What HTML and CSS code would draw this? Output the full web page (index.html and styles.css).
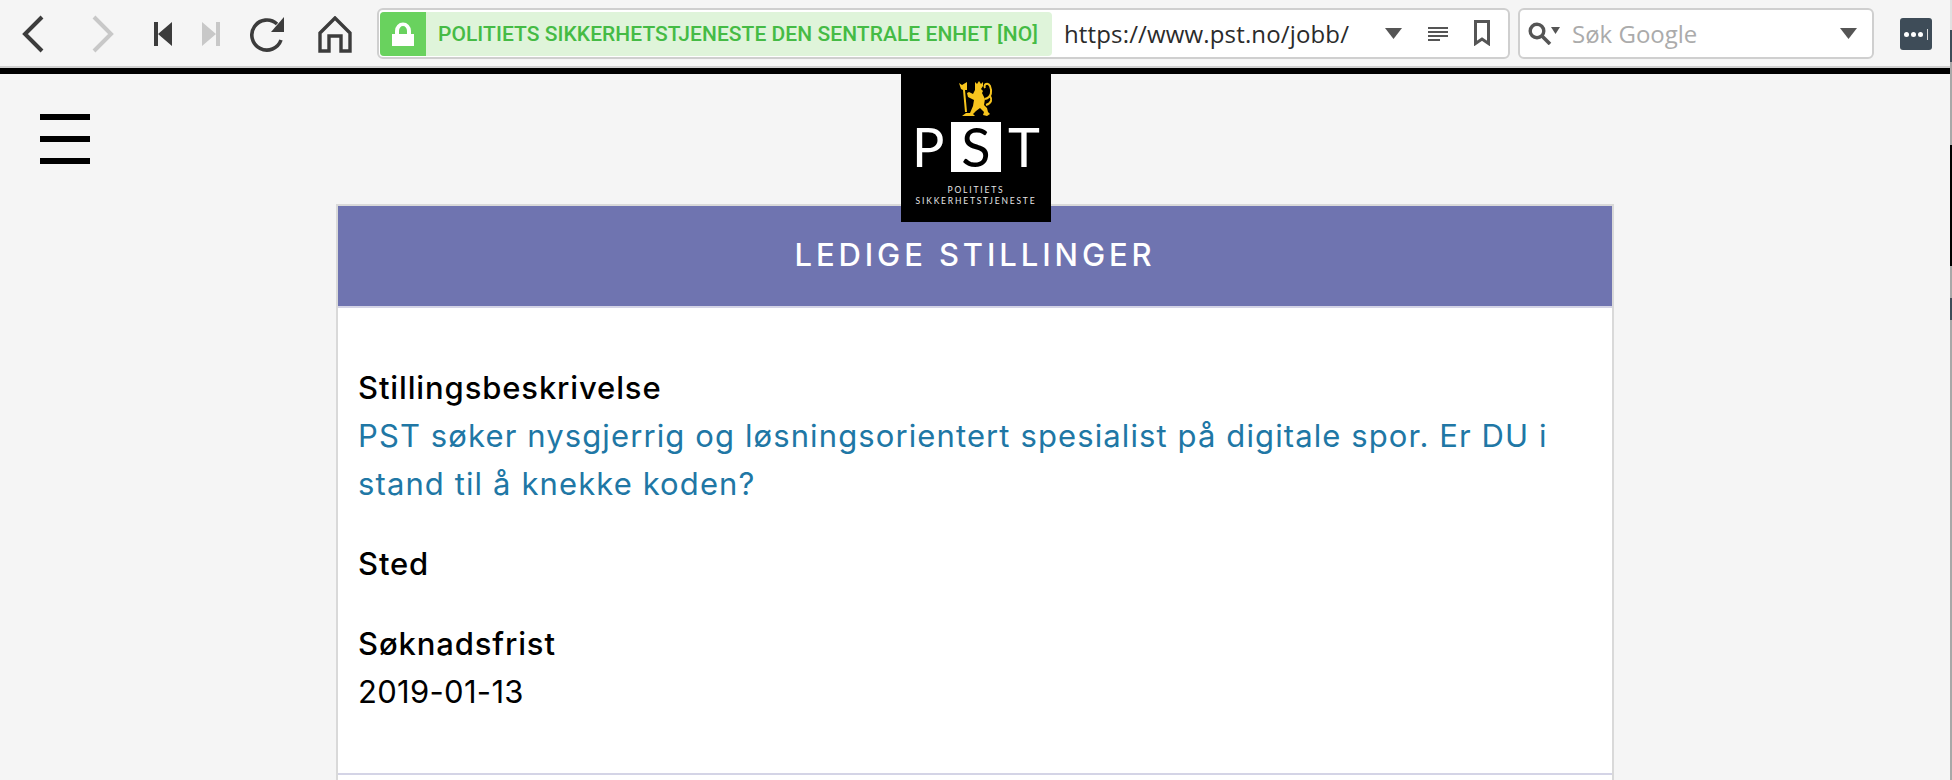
FILE: index.html
```html
<!DOCTYPE html>
<html lang="no">
<head>
    <meta charset="UTF-8">
    <link rel="stylesheet" href="styles.css">
    <title>Ledige stillinger - PST</title>
</head>
<body>
    <!-- Nettleserens verktøylinje -->
    <div class="toolbar">
        <svg class="tool tool-back" width="22" height="38" viewBox="0 0 22 38"><path d="M20 2 L3 19 L20 36" fill="none" stroke="#3c3c3c" stroke-width="4"/></svg>
        <svg class="tool tool-forward" width="22" height="38" viewBox="0 0 22 38"><path d="M2 2 L19 19 L2 36" fill="none" stroke="#c8c8c8" stroke-width="4"/></svg>
        <svg class="tool tool-first" width="18" height="24" viewBox="0 0 18 24"><path d="M0 0 H4 V24 H0 Z M18 0 V24 L4 12 Z" fill="#3c3c3c"/></svg>
        <svg class="tool tool-last" width="18" height="24" viewBox="0 0 18 24"><path d="M18 0 H14 V24 H18 Z M0 0 V24 L14 12 Z" fill="#c8c8c8"/></svg>
        <svg class="tool tool-reload" width="36" height="36" viewBox="0 0 36 36"><path d="M31 24 A15 15 0 1 1 27 8" fill="none" stroke="#3c3c3c" stroke-width="3.6"/><path d="M34 1 V16 H21 Z" fill="#3c3c3c"/></svg>
        <svg class="tool tool-home" width="34" height="37" viewBox="0 0 34 37"><path d="M2 35 V17 L17 2 L32 17 V35 H23 V20 H11 V35 Z" fill="none" stroke="#3c3c3c" stroke-width="3.4"/></svg>

        <div class="urlbar">
            <div class="identity">
                <span class="identity-lock">
                    <svg width="22" height="24" viewBox="0 0 22 24"><path d="M0 12 H3 V9 A8 8.500 0 0 1 19 9 V12 H22 V24 H0 Z M7 12 H15 V9 A4 5 0 0 0 7 9 Z" fill="#fff" fill-rule="evenodd"/></svg>
                </span>
                <span class="identity-name">POLITIETS SIKKERHETSTJENESTE DEN SENTRALE ENHET [NO]</span>
            </div>
            <span class="url">https://www.pst.no/jobb/</span>
            <svg class="url-drop" width="17" height="11" viewBox="0 0 17 11"><path d="M0 0 H17 L8.500 11 Z" fill="#555"/></svg>
            <svg class="url-reader" width="20" height="14" viewBox="0 0 20 14"><path d="M0 0 H20 V2 H0 Z M0 4 H20 V6 H0 Z M0 8 H20 V10 H0 Z M0 12 H12 V14 H0 Z" fill="#555"/></svg>
            <svg class="url-mark" width="16" height="26" viewBox="0 0 16 26"><path d="M1.500 1.500 H14.500 V23.500 L8 19 L1.500 23.500 Z" fill="none" stroke="#555" stroke-width="3"/></svg>
        </div>

        <div class="searchbar">
            <svg class="search-icon" width="33" height="23" viewBox="0 0 33 23"><circle cx="9" cy="9" r="6.800" fill="none" stroke="#555" stroke-width="3.400"/><path d="M13.500 13.500 L22 22" stroke="#555" stroke-width="3.600"/><path d="M23 5 H32 L27.500 12 Z" fill="#555"/></svg>
            <span class="search-text">Søk Google</span>
            <svg class="search-drop" width="17" height="11" viewBox="0 0 17 11"><path d="M0 0 H17 L8.500 11 Z" fill="#555"/></svg>
        </div>

        <div class="ext-button">
            <span class="ext-dot"></span><span class="ext-dot"></span><span class="ext-dot"></span><span class="ext-bar"></span>
        </div>
    </div>

    <div class="black-line"></div>

    <!-- Siden -->
    <div class="page">
        <div class="burger"><span></span><span></span><span></span></div>

        <div class="logo">
            <svg class="logo-arms" width="34" height="36" viewBox="0 0 34 36">
                <path fill="#f7c51e" d="M0 2 L3 4 L8 1 L8 9 L6 9 L8 31 L6 31 L4 9 L2 8 Z
                    M16 4 L16 1 L18 3 L20 0 L22 3 L24 1 L24 5 L22 8 L24 10 L23 12 L26 18 L25 24 L28 27 L29 31 L31 33 L28 35 L24 34 L25 31 L21 27 L17 30 L14 33 L16 35 L3 35 L7 32 L11 32 L14 25 L15 19 L9 16 L8 12 L10 11 L14 13 L16 9 Z"/>
                <path fill="none" stroke="#f7c51e" stroke-width="2" d="M26 18 C33 16 33 10 31 5 C29 1 24 3 26 7 M27 24 C33 22 33 18 31 15"/>
            </svg>
            <div class="logo-letters">
                <span class="logo-p">P</span><span class="logo-s">S</span><span class="logo-t">T</span>
            </div>
            <div class="logo-small logo-small-top">POLITIETS</div>
            <div class="logo-small">SIKKERHETSTJENESTE</div>
        </div>

        <div class="card">
            <h1 class="card-title">LEDIGE STILLINGER</h1>
            <div class="card-body">
                <div class="field">
                    <div class="field-label">Stillingsbeskrivelse</div>
                    <a class="field-link" href="#">PST søker nysgjerrig og løsningsorientert spesialist på digitale spor. Er DU i stand til å knekke koden?</a>
                </div>
                <div class="field">
                    <div class="field-label">Sted</div>
                </div>
                <div class="field">
                    <div class="field-label">Søknadsfrist</div>
                    <div class="field-value">2019-01-13</div>
                </div>
            </div>
            <div class="card-rule"></div>
        </div>
    </div>

    <div class="window-edge"></div>
</body>
</html>
```

FILE: styles.css
```css
/* Generelt */
html, body {
    height: 780px;
    overflow: hidden;
}

body {
    position: relative;
    margin: 0;
    background-color: #f5f5f5;
    font-family: Inter, "Liberation Sans", sans-serif;
    color: #000;
}

/* Verktøylinje */
.toolbar {
    display: flex;
    align-items: center;
    height: 66px;
    background-color: #f5f5f5;
    border-bottom: 2px solid #d0d0d0;
}

.tool {
    flex: none;
}

.tool-back { margin-left: 22px; margin-top: 2px; }
.tool-forward { margin-left: 48px; margin-top: 2px; }
.tool-first { margin-left: 40px; margin-top: 2px; }
.tool-last { margin-left: 30px; margin-top: 2px; }
.tool-reload { margin-left: 30px; margin-top: 2px; }
.tool-home { margin-left: 32px; margin-top: 2px; }

.urlbar,
.searchbar {
    display: flex;
    align-items: center;
    box-sizing: border-box;
    height: 51px;
    margin-top: 1px;
    background-color: #fff;
    border: 2px solid #cfcfcf;
    border-radius: 6px;
}

.urlbar {
    width: 1133px;
    margin-left: 25px;
    padding-left: 1px;
}

.identity {
    display: flex;
    align-items: center;
    width: 672px;
    height: 44px;
    background-color: #dff4da;
    border-radius: 4px;
    overflow: hidden;
}

.identity-lock {
    display: flex;
    align-items: center;
    justify-content: center;
    width: 46px;
    height: 44px;
    background-color: #69d25e;
}

.identity-name {
    margin-left: 12px;
    font-family: Roboto, sans-serif;
    font-size: 21px;
    font-weight: 500;
    letter-spacing: 0.05px;
    color: #45bb45;
    white-space: nowrap;
}

.url {
    width: 321px;
    margin-left: 12px;
    font-family: "Open Sans", sans-serif;
    font-size: 24px;
    letter-spacing: 0.15px;
    color: #2b2b2b;
    white-space: nowrap;
}

.url-reader { margin-left: 26px; }
.url-mark { margin-left: 26px; margin-top: -1px; }

.searchbar {
    width: 356px;
    margin-left: 8px;
    padding-left: 8px;
}

.search-text {
    width: 268px;
    margin-left: 11px;
    font-family: "Open Sans", sans-serif;
    font-size: 24px;
    color: #ababab;
}

.ext-button {
    display: flex;
    align-items: center;
    box-sizing: border-box;
    width: 32px;
    height: 32px;
    margin-left: 26px;
    margin-top: 2px;
    padding-left: 4px;
    gap: 2px;
    background-color: #3e4c58;
    border-radius: 3px;
}

.ext-dot {
    width: 5px;
    height: 5px;
    background-color: #fff;
    border-radius: 50%;
}

.ext-bar {
    width: 1px;
    height: 11px;
    margin-left: 2px;
    background-color: #ddd;
}

.black-line {
    height: 6px;
    background-color: #000;
}

/* Siden */
.page {
    position: relative;
    padding-top: 130px;
}

.burger {
    position: absolute;
    top: 40px;
    left: 40px;
    display: flex;
    flex-direction: column;
    gap: 16px;
    width: 50px;
}

.burger span {
    height: 6px;
    background-color: #000;
}

.logo {
    position: absolute;
    top: 0;
    left: 901px;
    z-index: 2;
    display: flex;
    flex-direction: column;
    align-items: center;
    box-sizing: border-box;
    width: 150px;
    height: 148px;
    padding-top: 7px;
    background-color: #000;
    color: #fff;
}

.logo-arms {
    display: block;
}

.logo-letters {
    display: flex;
    align-items: center;
    width: 150px;
    height: 50px;
    margin-top: 5px;
    font-family: Lato, sans-serif;
    font-weight: 400;
    font-size: 54px;
    line-height: 50px;
}

.logo-p { width: 50px; padding-left: 11px; box-sizing: border-box; }
.logo-s { width: 50px; background-color: #fff; color: #000; text-align: center; }
.logo-t { width: 50px; padding-left: 7px; box-sizing: border-box; }

.logo-small {
    font-family: Lato, sans-serif;
    font-size: 8.500px;
    line-height: 11px;
    letter-spacing: 1.800px;
    color: #e6e6e6;
    white-space: nowrap;
}

.logo-small-top {
    margin-top: 13px;
}

/* Kortet */
.card {
    box-sizing: border-box;
    width: 1278px;
    height: 576px;
    margin-left: 336px;
    background-color: #fff;
    border: 2px solid #d9d9d9;
    border-bottom: 0;
}

.card-title {
    box-sizing: border-box;
    height: 100px;
    margin: 0;
    background-color: #6f74b0;
    color: #fff;
    font-size: 31px;
    font-weight: 500;
    line-height: 97px;
    letter-spacing: 3.900px;
    text-align: center;
}

.card-body {
    padding: 56px 50px 25px 20px;
    border-top: 2px solid #d4d4e6;
    font-size: 31px;
    line-height: 48px;
}

.field {
    margin-bottom: 32px;
}

.field-label {
    font-weight: 500;
    letter-spacing: 0.870px;
}

.field-link {
    display: block;
    color: #2077a5;
    letter-spacing: 1.110px;
    text-decoration: none;
}

.field-value {
    letter-spacing: 0.300px;
}

.card-rule {
    height: 2px;
    background-color: #d4d4e6;
}

/* Smal stripe fra vinduet bak */
.window-edge {
    position: absolute;
    top: 0;
    right: 0;
    width: 2px;
    height: 780px;
    background: linear-gradient(to bottom,
        #e0e0e0 0 30px, #3e4c58 30px 62px, #a8a8a8 62px 145px,
        #000 145px 266px, #a8a8a8 266px 298px, #3e4c58 298px 320px, #a8a8a8 320px);
}
```
